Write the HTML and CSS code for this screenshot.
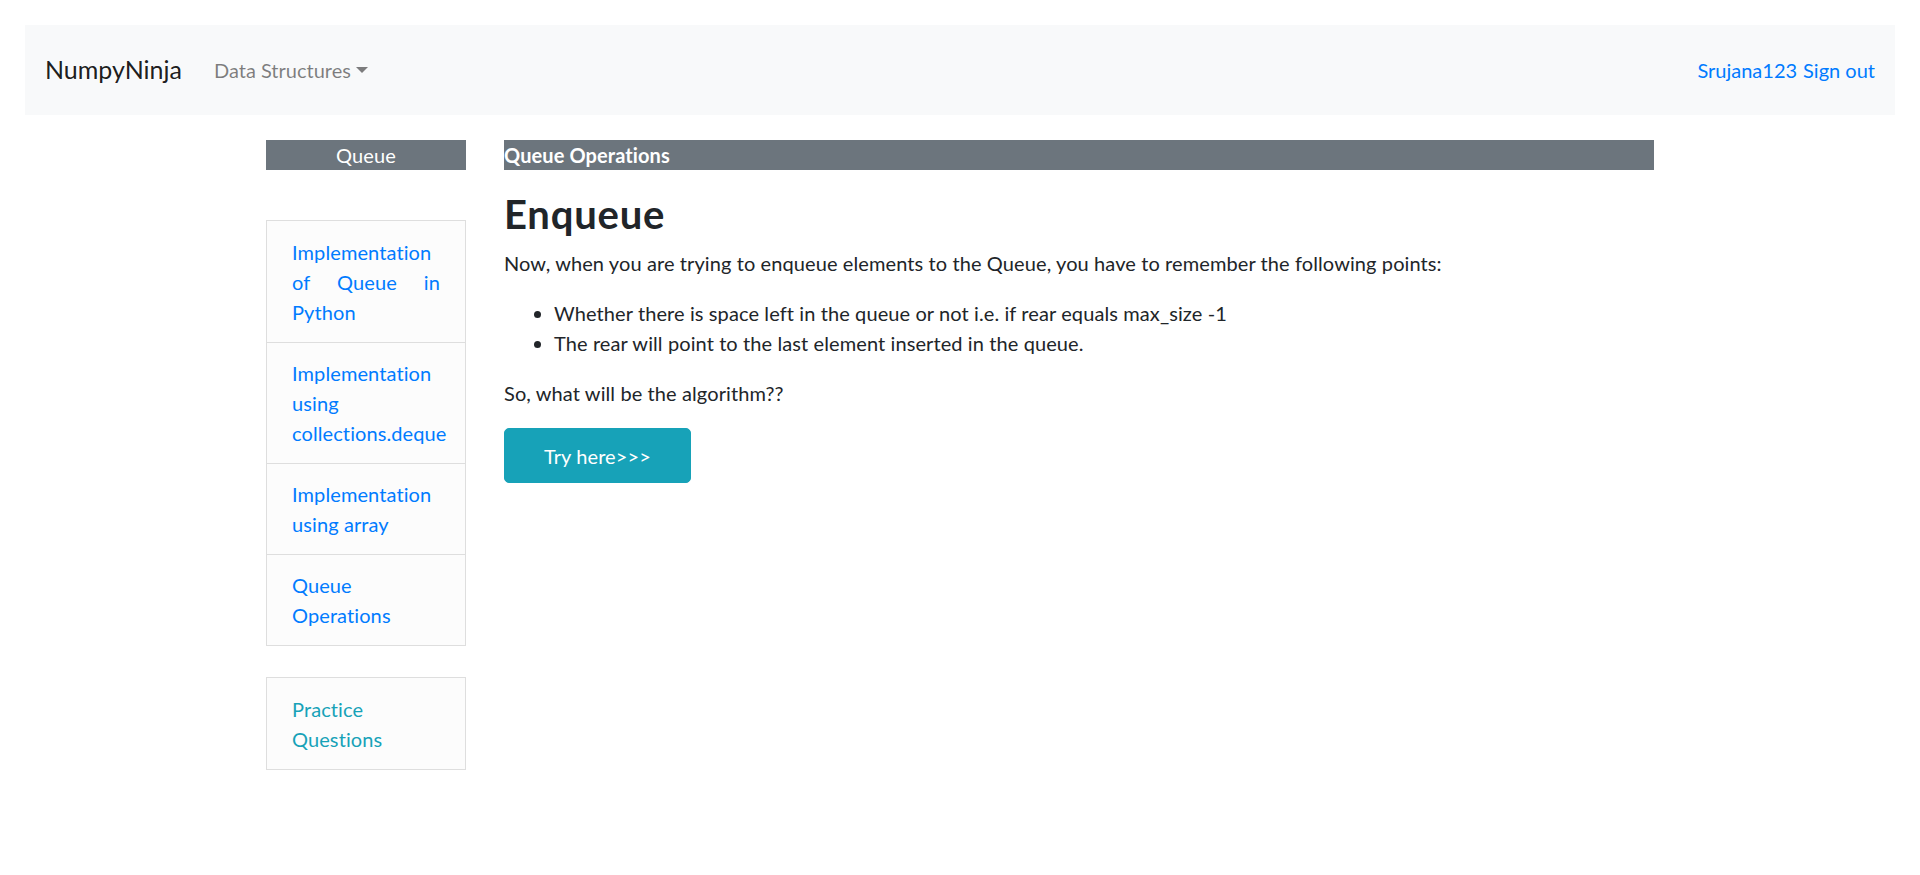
FILE: index.html
```html
<!DOCTYPE html>
<html lang="en">
<head>
<meta charset="utf-8">
<title>Queue Operations</title>
<link rel="stylesheet" href="styles.css">
</head>
<body>
<nav class="navbar">
  <a class="brand" href="#">NumpyNinja</a>
  <a class="dropdown" href="#">Data Structures<span class="caret"></span></a>
  <div class="user">
    <a href="#">Srujana123</a>
    <a href="#">Sign out</a>
  </div>
</nav>
<div class="container">
  <aside class="sidebar">
    <div class="side-header">Queue</div>
    <div class="list-group">
      <a class="list-item" href="#">Implementation of Queue in Python</a>
      <a class="list-item" href="#">Implementation using collections.deque</a>
      <a class="list-item" href="#">Implementation using array</a>
      <a class="list-item" href="#">Queue Operations</a>
    </div>
    <div class="list-group practice">
      <a class="list-item info" href="#">Practice Questions</a>
    </div>
  </aside>
  <main class="content">
    <div class="content-header">Queue Operations</div>
    <h2 class="title">Enqueue</h2>
    <p>Now, when you are trying to enqueue elements to the Queue, you have to remember the following points:</p>
    <ul>
      <li>Whether there is space left in the queue or not i.e. if rear equals max_size -1</li>
      <li>The rear will point to the last element inserted in the queue.</li>
    </ul>
    <p>So, what will be the algorithm??</p>
    <a class="btn" href="#">Try here&gt;&gt;&gt;</a>
  </main>
</div>
</body>
</html>
```
FILE: styles.css
```css
* { box-sizing: border-box; }
html, body { margin: 0; }
body {
  padding: 25px 25px 0;
  font-family: Lato, "Open Sans", sans-serif;
  font-size: 20px;
  line-height: 1.5;
  letter-spacing: 0.1px;
  color: #212529;
  background: #fff;
}
a { text-decoration: none; }

.navbar {
  display: flex;
  align-items: center;
  height: 90px;
  padding: 0 20px;
  background: #f8f9fa;
  letter-spacing: 0;
}
.brand {
  font-size: 25px;
  color: rgba(0,0,0,.9);
  margin-right: 32px;
}
.dropdown {
  color: rgba(0,0,0,.5);
}
.caret {
  display: inline-block;
  margin-left: 5px;
  vertical-align: 5px;
  border-top: 6px solid;
  border-left: 6px solid transparent;
  border-right: 6px solid transparent;
}
.user {
  margin-left: auto;
  display: flex;
  gap: 6px;
}
.user a { color: #007bff; }

.container {
  width: 1388px;
  margin: 25px auto 0;
  display: grid;
  grid-template-columns: 200px 1150px;
  column-gap: 38px;
  align-items: start;
}

.side-header {
  background: #6c757d;
  color: #fff;
  text-align: center;
  line-height: 30px;
}
.list-group {
  margin-top: 50px;
  border: 1px solid #dedede;
  display: flex;
  flex-direction: column;
}
.list-group.practice { margin-top: 31px; }
.list-item {
  display: block;
  padding: 15px 25px;
  background: #fcfcfc;
  color: #007bff;
  text-align: justify;
}
.list-item:first-child { padding-top: 16px; }
.list-item + .list-item { border-top: 1px solid #dedede; }
.list-item.info { color: #17a2b8; }

.content-header {
  background: #6c757d;
  color: #fff;
  font-weight: 700;
  line-height: 30px;
}
.title {
  font-size: 40px;
  font-weight: 700;
  line-height: 1.2;
  letter-spacing: 0.8px;
  margin: 20px 0 10px;
}
p { margin: 0 0 20px; }
ul { margin: 0 0 20px; padding-left: 50px; }
.btn {
  display: inline-block;
  background: #17a2b8;
  border: 1px solid #17a2b8;
  color: #fff;
  line-height: 30px;
  padding: 11.5px 39px;
  border-radius: 5px;
}
```
